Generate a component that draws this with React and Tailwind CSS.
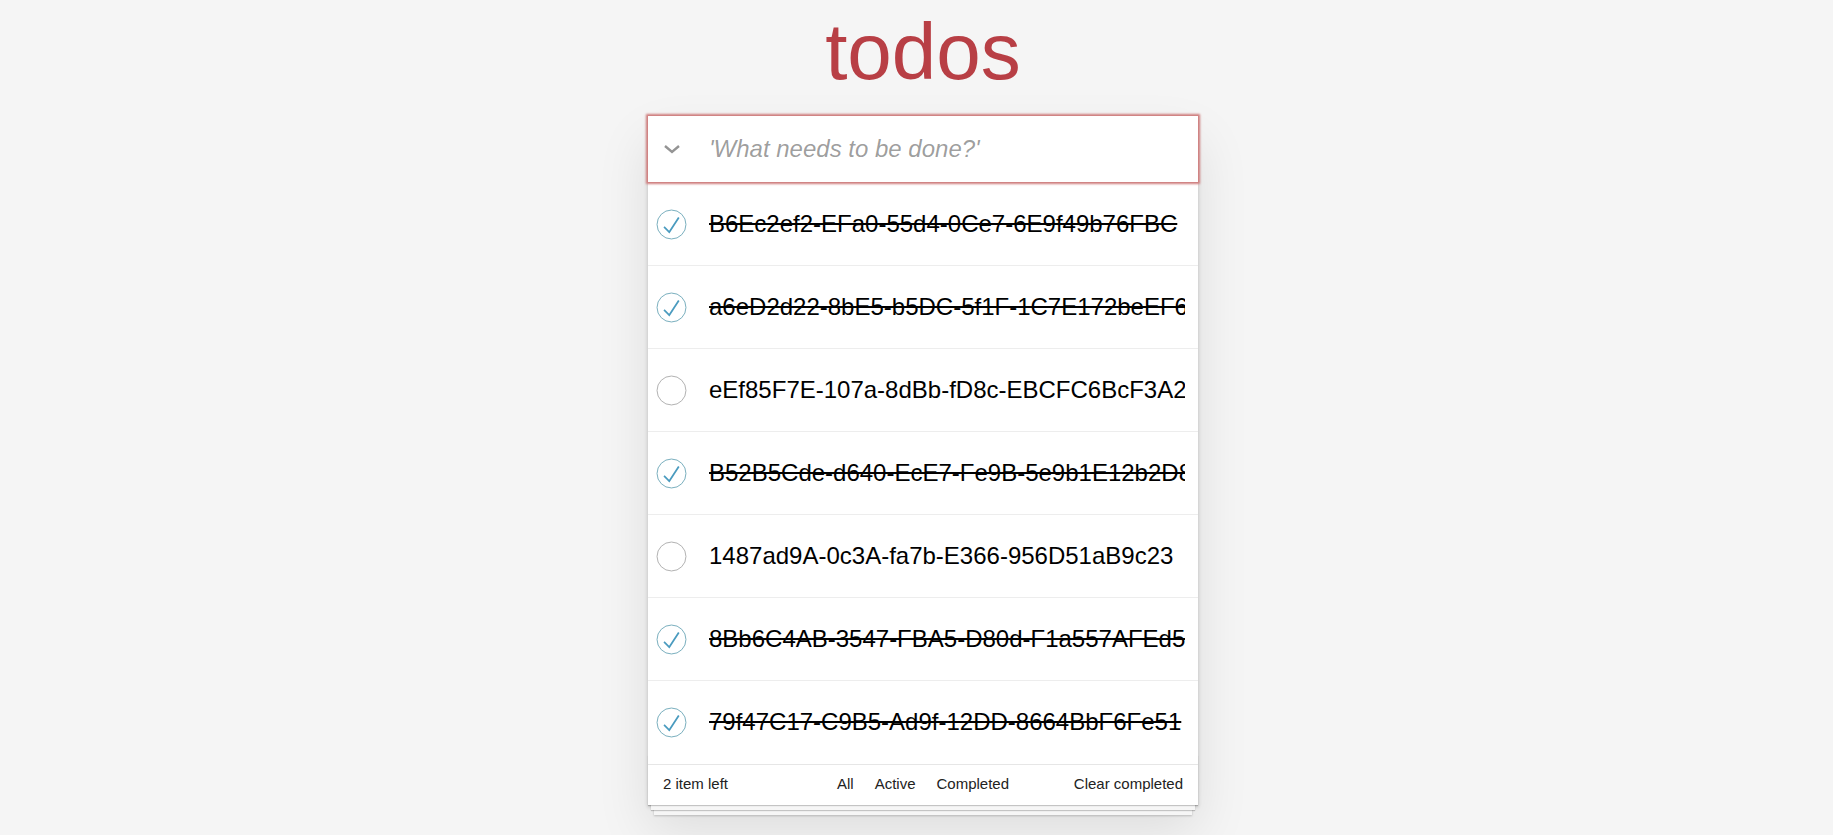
import React from "react";

const todos = [
  { id: 1, title: "B6Ec2ef2-EFa0-55d4-0Ce7-6E9f49b76FBC", completed: true },
  { id: 2, title: "a6eD2d22-8bE5-b5DC-5f1F-1C7E172beEF6", completed: true },
  { id: 3, title: "eEf85F7E-107a-8dBb-fD8c-EBCFC6BcF3A2", completed: false },
  { id: 4, title: "B52B5Cde-d640-EcE7-Fe9B-5e9b1E12b2D8", completed: true },
  { id: 5, title: "1487ad9A-0c3A-fa7b-E366-956D51aB9c23", completed: false },
  { id: 6, title: "8Bb6C4AB-3547-FBA5-D80d-F1a557AFEd5e", completed: true },
  { id: 7, title: "79f47C17-C9B5-Ad9f-12DD-8664BbF6Fe51", completed: true },
];

function Toggle({ checked }) {
  return (
    <svg width="31" height="31" viewBox="-2 -2 104 104" className="shrink-0">
      <circle
        cx="50"
        cy="50"
        r="48.5"
        fill="none"
        stroke={checked ? "#6aa5b6" : "#a8a8a8"}
        strokeWidth="3"
      />
      {checked && (
        <path fill="#4a9bbf" d="M72 25L42 71 27 56l-4 4 20 20 34-52z" />
      )}
    </svg>
  );
}

export default function App() {
  const left = todos.filter((t) => !t.completed).length;
  return (
    <div
      className="min-h-screen bg-[#f5f5f5] flex flex-col items-center pl-[13px] pt-[12px] text-[#111111]"
      style={{ fontFamily: '"Liberation Sans", Arial, Helvetica, sans-serif' }}
    >
      <h1 className="h-[80px] text-[80px] leading-[80px] font-normal text-[#b83f45] text-center">
        todos
      </h1>
      <section className="mt-[24px] w-[550px] bg-white relative shadow-[0_2px_4px_0_rgba(0,0,0,0.2),0_25px_50px_0_rgba(0,0,0,0.1)]">
        <header className="relative h-[66px]">
          <div className="absolute left-0 top-0 h-[66px] w-[45px] flex items-center justify-center pl-[2px] pointer-events-none z-10">
            <svg width="18" height="10" viewBox="0 0 18 10">
              <polyline
                points="2,2 9,8 16,2"
                fill="none"
                stroke="#949494"
                strokeWidth="2.4"
                strokeLinejoin="miter"
              />
            </svg>
          </div>
          <input
            autoFocus
            className="w-full h-[66px] pl-[61px] pr-[16px] text-[24px] leading-[1.4] bg-white outline-none shadow-[0_0_2px_2px_#cf7d7d] placeholder:italic placeholder:text-[rgba(0,0,0,0.4)] caret-[#111]"
            style={{ fontFamily: '"Liberation Sans", Arial, Helvetica, sans-serif' }}
            placeholder="'What needs to be done?'"
          />
        </header>
        <ul className="border-t border-[#e6e6e6]">
          {todos.map((t, i) => (
            <li
              key={t.id}
              className={
                "h-[83px] flex items-center " +
                (i < todos.length - 1 ? "border-b border-[#ededed]" : "")
              }
            >
              <div className="w-[61px] shrink-0 flex items-center pl-[8px]">
                <Toggle checked={t.completed} />
              </div>
              <div className="flex-1 min-w-0 pr-[13px]">
                <div
                  className={
                    "overflow-hidden whitespace-nowrap text-[24px] leading-[1.2] text-black " +
                    (t.completed ? "line-through" : "")
                  }
                >
                  {t.title}
                </div>
              </div>
            </li>
          ))}
        </ul>
        <footer className="relative h-[41px] border-t border-[#e6e6e6] px-[15px] pb-[2px] flex items-center text-[15px] text-[#222222]">
          <div className="absolute inset-x-0 bottom-0 h-[50px] pointer-events-none shadow-[0_1px_1px_rgba(0,0,0,0.2),0_8px_0_-3px_#f6f6f6,0_9px_1px_-3px_rgba(0,0,0,0.2),0_16px_0_-6px_#f6f6f6,0_17px_2px_-6px_rgba(0,0,0,0.2)]" />
          <span className="relative flex-1">{left} item left</span>
          <ul className="relative flex items-center gap-[5px]">
            <li>
              <a className="px-[7px] py-[3px] border border-transparent rounded-[3px]">All</a>
            </li>
            <li>
              <a className="px-[7px] py-[3px] border border-transparent rounded-[3px]">Active</a>
            </li>
            <li>
              <a className="px-[7px] py-[3px] border border-transparent rounded-[3px]">Completed</a>
            </li>
          </ul>
          <span className="relative flex-1 text-right">Clear completed</span>
        </footer>
      </section>
    </div>
  );
}
